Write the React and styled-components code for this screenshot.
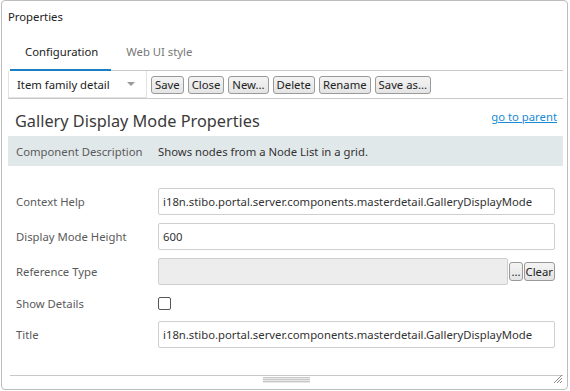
import React from "react";
import styled, { createGlobalStyle } from "styled-components";

const Global = createGlobalStyle`
  body {
    margin: 0;
    background: #fff;
    font-family: "Noto Sans", "Open Sans", sans-serif;
    font-size: 11.3px;
    color: #333;
  }
`;

const Panel = styled.div`
  position: relative;
  box-sizing: border-box;
  width: 567px;
  height: 390px;
  margin-left: 1px;
  border: 1px solid #bdbdbd;
  border-radius: 4px;
  display: flex;
  flex-direction: column;
  overflow: hidden;
`;

const Header = styled.div`
  height: 32px;
  line-height: 32px;
  padding-left: 6px;
  color: #222;
`;

const Body = styled.div`
  flex: 1;
  display: flex;
  flex-direction: column;
  padding: 0 4px 0 6px;
`;

const TabBar = styled.div`
  display: flex;
  margin-left: 2px;
  border-bottom: 1px solid #c8c8c8;
`;

const Tab = styled.div`
  height: 38px;
  line-height: 38px;
  padding: 0 13px 0 15px;
  box-sizing: border-box;
  color: ${(p) => (p.active ? "#222" : "#777")};
  border-bottom: 2px solid ${(p) => (p.active ? "#1a7fc4" : "transparent")};
  margin-bottom: -1px;
`;

const Toolbar = styled.div`
  display: flex;
  align-items: center;
  gap: 4px;
  height: 27px;
  border-bottom: 1px solid #c8c8c8;
`;

const Select = styled.div`
  box-sizing: border-box;
  width: 139px;
  height: 27px;
  display: flex;
  align-items: center;
  justify-content: space-between;
  padding: 0 11px 0 8px;
  border: 1px solid #e2e2e2;
  border-top: none;
  color: #222;
`;

const Caret = styled.span`
  width: 0;
  height: 0;
  border-left: 4px solid transparent;
  border-right: 4px solid transparent;
  border-top: 4px solid #999;
`;

const Button = styled.button`
  font: inherit;
  color: #222;
  height: 18px;
  padding: 0 3px;
  line-height: 15px;
  border: 1px solid #9a9a9a;
  border-radius: 3px;
  background: linear-gradient(#f4f4f4, #e4e4e4);
`;

const TitleRow = styled.div`
  height: 37px;
  display: flex;
  align-items: center;
  justify-content: space-between;
  padding: 0 6px 0 7px;
`;

const Heading = styled.div`
  font-size: 16.3px;
  color: #3a3a3a;
  padding-top: 7px;
`;

const Link = styled.a`
  color: #1a8ad4;
  text-decoration: underline;
  margin-bottom: 2px;
`;

const DescBar = styled.div`
  height: 30px;
  display: flex;
  align-items: center;
  background: #e1e8ea;
  margin-bottom: 22px;
`;

const Label = styled.div`
  width: 150px;
  padding-left: 8px;
  box-sizing: border-box;
  color: #5a5a5a;
  flex-shrink: 0;
  white-space: nowrap;
`;

const DescText = styled.div`
  color: #333;
`;

const Rows = styled.div`
  display: flex;
  flex-direction: column;
  gap: 8px;
  padding-right: 8px;
`;

const Row = styled.div`
  display: flex;
  align-items: center;
  height: ${(p) => p.h || 27}px;
`;

const Input = styled.div`
  flex: 1;
  box-sizing: border-box;
  height: 27px;
  line-height: 25px;
  padding-left: 4px;
  border: 1px solid #cfcfcf;
  border-radius: 2px;
  background: ${(p) => (p.disabled ? "#ededed" : "#fff")};
  color: #333;
  white-space: nowrap;
  overflow: hidden;
`;

const SmallButton = styled.button`
  font: inherit;
  color: #222;
  height: 19px;
  padding: 0 1px;
  line-height: 16px;
  border: 1px solid #999;
  border-radius: 3px;
  background: linear-gradient(#f4f4f4, #e4e4e4);
  margin-left: 1px;
`;

const Check = styled.div`
  width: 13px;
  height: 13px;
  box-sizing: border-box;
  border: 1px solid #555;
  border-radius: 2px;
  background: #fff;
`;

const Footer = styled.div`
  margin-top: auto;
  height: 13px;
  border-top: 1px solid #c8c8c8;
  margin-left: 2px;
  display: flex;
  justify-content: center;
`;

const Handle = styled.div`
  width: 47px;
  height: 6px;
  margin-top: 1px;
  background: repeating-linear-gradient(#c8c8c8 0 1px, #e8e8e8 1px 2px);
`;

const Grip = styled.svg`
  position: absolute;
  right: 4px;
  bottom: 5px;
`;

export default function App() {
  return (
    <>
      <Global />
      <Panel>
        <Header>Properties</Header>
        <Body>
          <TabBar>
            <Tab active>Configuration</Tab>
            <Tab>Web UI style</Tab>
          </TabBar>
          <Toolbar>
            <Select>
              Item family detail
              <Caret />
            </Select>
            <Button>Save</Button>
            <Button>Close</Button>
            <Button>New...</Button>
            <Button>Delete</Button>
            <Button>Rename</Button>
            <Button>Save as...</Button>
          </Toolbar>
          <TitleRow>
            <Heading>Gallery Display Mode Properties</Heading>
            <Link href="#">go to parent</Link>
          </TitleRow>
          <DescBar>
            <Label>Component Description</Label>
            <DescText>Shows nodes from a Node List in a grid.</DescText>
          </DescBar>
          <Rows>
            <Row>
              <Label>Context Help</Label>
              <Input>i18n.stibo.portal.server.components.masterdetail.GalleryDisplayMode</Input>
            </Row>
            <Row>
              <Label>Display Mode Height</Label>
              <Input>600</Input>
            </Row>
            <Row>
              <Label>Reference Type</Label>
              <Input disabled />
              <SmallButton>...</SmallButton>
              <SmallButton>Clear</SmallButton>
            </Row>
            <Row h={20}>
              <Label>Show Details</Label>
              <Check />
            </Row>
            <Row>
              <Label>Title</Label>
              <Input>i18n.stibo.portal.server.components.masterdetail.GalleryDisplayMode</Input>
            </Row>
          </Rows>
          <Footer>
            <Handle />
          </Footer>
        </Body>
        <Grip width="10" height="10" viewBox="0 0 10 10">
          <path d="M9 1 L1 9 M9 4 L4 9 M9 7 L7 9" stroke="#888" strokeWidth="1" />
        </Grip>
      </Panel>
    </>
  );
}
